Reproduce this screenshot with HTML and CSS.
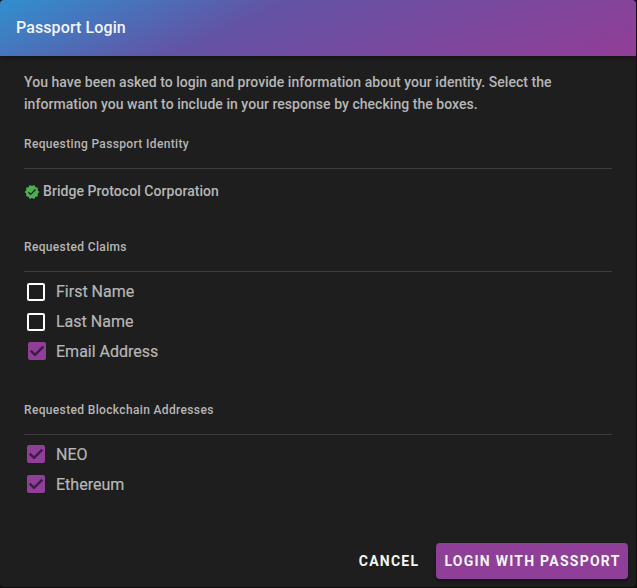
FILE: index.html
```html
<!DOCTYPE html>
<html lang="en">
<head>
<meta charset="utf-8">
<title>Passport Login</title>
<link rel="stylesheet" href="styles.css">
</head>
<body>
<svg class="defs" width="0" height="0" aria-hidden="true">
  <symbol id="checked" viewBox="0 0 24 24"><path d="M19 3H5C3.89 3 3 3.89 3 5V19C3 20.1 3.9 21 5 21H19C20.1 21 21 20.1 21 19V5C21 3.89 20.1 3 19 3Z"/></symbol>
  <symbol id="mark" viewBox="0 0 24 24"><path d="M5.7 11.6L10 15.9L18.3 7.6" fill="none" stroke="#42184a" stroke-width="2.4"/></symbol>
  <symbol id="blank" viewBox="0 0 24 24"><path d="M19 3H5C3.89 3 3 3.89 3 5V19C3 20.1 3.9 21 5 21H19C20.1 21 21 20.1 21 19V5C21 3.89 20.1 3 19 3M19 5V19H5V5H19Z"/></symbol>
</svg>
<main class="dialog">
  <header class="toolbar">Passport Login</header>
  <div class="content">
    <p class="intro">You have been asked to login and provide information about your identity. Select the<br>information you want to include in your response by checking the boxes.</p>
    <section class="identity">
      <h2>Requesting Passport Identity</h2>
      <div class="issuer">
        <svg class="verified" viewBox="0 0 24 24"><path d="M23 12L20.56 9.22L20.9 5.54L17.29 4.72L15.4 1.54L12 3L8.6 1.54L6.71 4.72L3.1 5.53L3.44 9.21L1 12L3.44 14.78L3.1 18.47L6.71 19.29L8.6 22.47L12 21L15.4 22.46L17.29 19.28L20.9 18.46L20.56 14.78L23 12M10 17L6 13L7.41 11.59L10 14.17L16.59 7.58L18 9L10 17Z"/></svg>
        <span>Bridge Protocol Corporation</span>
      </div>
    </section>
    <section class="claims">
      <h2>Requested Claims</h2>
      <div class="option"><svg class="box"><use href="#blank"/></svg><span>First Name</span></div>
      <div class="option"><svg class="box"><use href="#blank"/></svg><span>Last Name</span></div>
      <div class="option"><svg class="box on shifted"><use href="#checked"/><use href="#mark"/></svg><span>Email Address</span></div>
    </section>
    <section class="addresses">
      <h2>Requested Blockchain Addresses</h2>
      <div class="option"><svg class="box on"><use href="#checked"/><use href="#mark"/></svg><span>NEO</span></div>
      <div class="option"><svg class="box on"><use href="#checked"/><use href="#mark"/></svg><span>Ethereum</span></div>
    </section>
  </div>
  <footer class="actions">
    <button class="cancel">CANCEL</button>
    <button class="login">LOGIN WITH PASSPORT</button>
  </footer>
</main>
</body>
</html>
```
FILE: styles.css
```css
* { box-sizing: border-box; }
body { margin: 0; background: #0d0d0f; font-family: Roboto, sans-serif; color: #b6b6b6; }
.defs { position: absolute; }
.dialog { width: 636px; height: 587px; display: flex; flex-direction: column; background: #1e1e1e; border-radius: 4px; overflow: hidden; }
.toolbar { height: 56px; flex: none; padding-left: 16px; line-height: 56px; font-size: 16px; font-weight: 500; letter-spacing: .1px; color: #f4f4fc; background: linear-gradient(155deg, #318fce 0%, #6353a5 38%, #923d96 100%); box-shadow: 0 2px 4px rgba(0,0,0,.35); }
.content { padding: 15px 24px 0; flex: 1; }
.intro { margin: 0; font-size: 14px; line-height: 22px; font-weight: 500; letter-spacing: .042px; }
h2 { margin: 0; height: 35px; border-bottom: 1px solid #3c3c3c; font-size: 12px; line-height: 20px; font-weight: 500; letter-spacing: .35px; }
.identity { margin-top: 19px; height: 103px; }
.issuer { height: 45px; display: flex; align-items: center; gap: 3px; font-size: 14px; font-weight: 500; letter-spacing: .05px; }
.issuer span { margin-top: -2px; }
.verified { width: 16px; height: 16px; fill: #4caf50; margin-top: 1px; }
.claims { height: 163px; }
.option { height: 30px; display: flex; align-items: center; gap: 8px; font-size: 16px; }
.option span { margin-top: -2px; -webkit-text-stroke: .2px currentColor; }
h2 + .option { margin-top: 5px; }
.box { width: 24px; height: 24px; fill: #fff; }
.on { fill: #8f3f97; margin-top: -2px; }
.shifted { margin: -2px -1px 0 1px; }
.actions { height: 52px; flex: none; padding: 8px; display: flex; justify-content: flex-end; }
button { height: 36px; border: 0; border-radius: 4px; padding: 0; background: none; font: 700 14px Roboto, sans-serif; letter-spacing: 1.25px; color: #f4f4f4; }
.cancel { width: 94px; }
.login { width: 192px; padding-left: 1px; background: #8f3f97; box-shadow: 0 2px 3px rgba(0,0,0,.4); }
```
